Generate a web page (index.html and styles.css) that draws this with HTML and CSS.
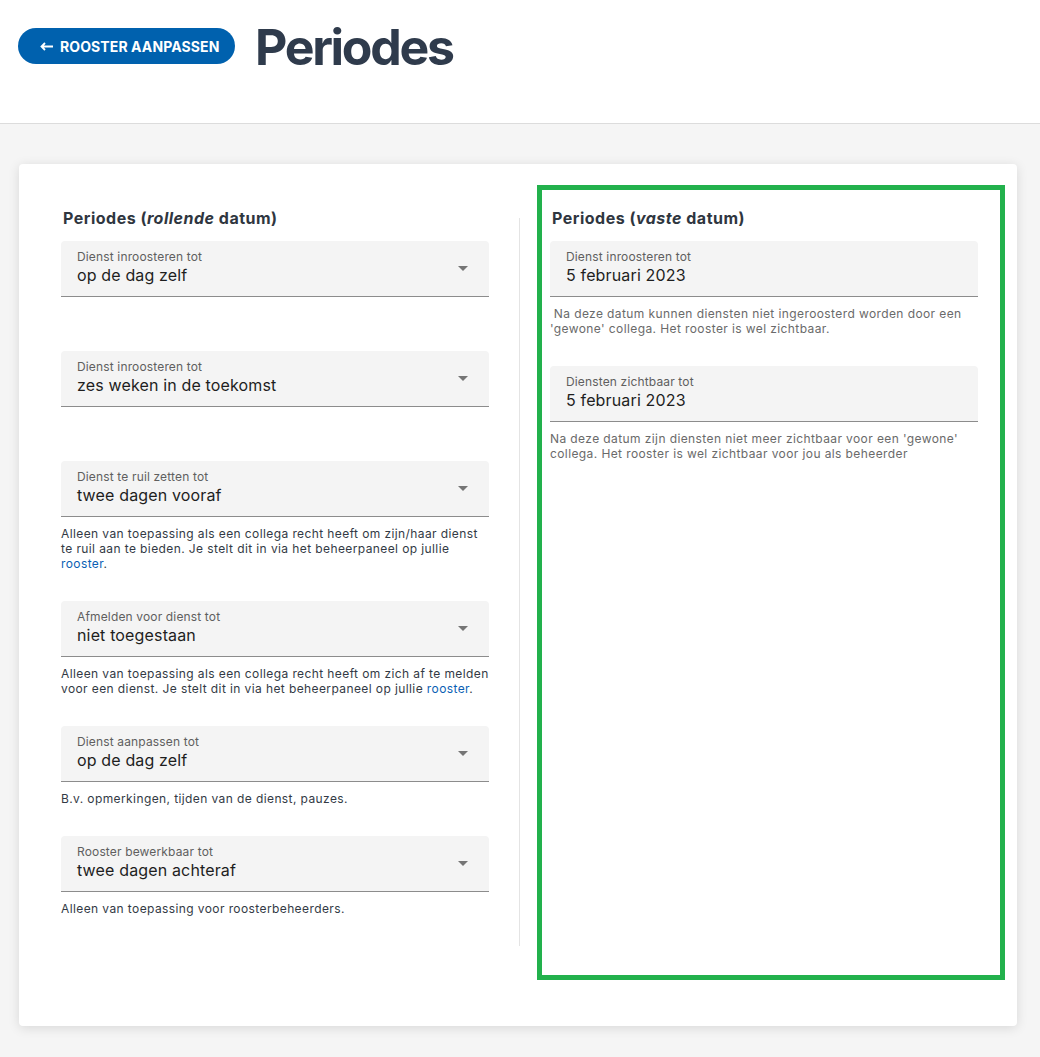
FILE: index.html
```html
<!DOCTYPE html>
<html lang="nl">
<head>
  <meta charset="UTF-8" />
  <meta name="viewport" content="width=device-width, initial-scale=1.0">
  <title>Periodes</title>
  <link rel="stylesheet" href="styles.css">
</head>
<body>

  <header class="topbar">
    <button class="back-btn">
      <svg class="arrow" width="13" height="9" viewBox="0 0 13 9"><path d="M13 4.5H2.5M5 1L1.5 4.5L5 8" fill="none" stroke="#fff" stroke-width="1.8"/></svg>
      ROOSTER AANPASSEN
    </button>
    <h1>Periodes</h1>
  </header>

  <main class="page">
    <div class="card">

      <section class="col col-rolling">
        <h3>Periodes (<em>rollende</em> datum)</h3>

        <div class="field">
          <div class="field-box">
            <label>Dienst inroosteren tot</label>
            <div class="value">op de dag zelf</div>
            <span class="caret"></span>
          </div>
          <div class="hint"></div>
        </div>

        <div class="field">
          <div class="field-box">
            <label>Dienst inroosteren tot</label>
            <div class="value">zes weken in de toekomst</div>
            <span class="caret"></span>
          </div>
          <div class="hint"></div>
        </div>

        <div class="field">
          <div class="field-box">
            <label>Dienst te ruil zetten tot</label>
            <div class="value">twee dagen vooraf</div>
            <span class="caret"></span>
          </div>
          <div class="hint">Alleen van toepassing als een collega recht heeft om zijn/haar dienst te ruil aan te bieden. Je stelt dit in via het beheerpaneel op jullie <a href="#">rooster</a>.</div>
        </div>

        <div class="field">
          <div class="field-box">
            <label>Afmelden voor dienst tot</label>
            <div class="value">niet toegestaan</div>
            <span class="caret"></span>
          </div>
          <div class="hint">Alleen van toepassing als een collega recht heeft om zich af te melden voor een dienst. Je stelt dit in via het beheerpaneel op jullie <a href="#">rooster</a>.</div>
        </div>

        <div class="field">
          <div class="field-box">
            <label>Dienst aanpassen tot</label>
            <div class="value">op de dag zelf</div>
            <span class="caret"></span>
          </div>
          <div class="hint">B.v. opmerkingen, tijden van de dienst, pauzes.</div>
        </div>

        <div class="field">
          <div class="field-box">
            <label>Rooster bewerkbaar tot</label>
            <div class="value">twee dagen achteraf</div>
            <span class="caret"></span>
          </div>
          <div class="hint">Alleen van toepassing voor roosterbeheerders.</div>
        </div>
      </section>

      <div class="divider"></div>

      <section class="col col-fixed">
        <h3>Periodes (<em>vaste</em> datum)</h3>

        <div class="field">
          <div class="field-box">
            <label>Dienst inroosteren tot</label>
            <div class="value">5 februari 2023</div>
          </div>
          <div class="hint muted">&nbsp;Na deze datum kunnen diensten niet ingeroosterd worden door een 'gewone' collega. Het rooster is wel zichtbaar.</div>
        </div>

        <div class="field">
          <div class="field-box">
            <label>Diensten zichtbaar tot</label>
            <div class="value">5 februari 2023</div>
          </div>
          <div class="hint muted">Na deze datum zijn diensten niet meer zichtbaar voor een 'gewone' collega. Het rooster is wel zichtbaar voor jou als beheerder</div>
        </div>
      </section>

    </div>
  </main>

</body>
</html>
```

FILE: styles.css
```css
body {
  margin: 0;
  background-color: #f5f5f5;
  font-family: 'Inter', 'Noto Sans', sans-serif;
  color: #222;
}

.topbar {
  background-color: #fff;
  height: 124px;
  border-bottom: 1px solid #dcdcdc;
  display: flex;
  align-items: flex-start;
  padding: 28px 0 0 18px;
  box-sizing: border-box;
}

.back-btn {
  height: 36px;
  width: 217px;
  border: none;
  border-radius: 18px;
  background-color: #0061ae;
  color: #fff;
  font-family: 'Inter', sans-serif;
  font-weight: 700;
  font-size: 14px;
  letter-spacing: 0.1px;
  cursor: pointer;
  padding: 0 0 0 22px;
  display: flex;
  align-items: center;
}

.back-btn .arrow {
  margin-right: 7px;
}

.topbar h1 {
  margin: -6px 0 0 20px;
  font-size: 50px;
  line-height: 1;
  font-weight: 700;
  letter-spacing: -2.3px;
  color: #2f3b4c;
}

.page {
  padding: 40px 23px 32px 19px;
}

.card {
  background-color: #fff;
  border-radius: 4px;
  box-shadow: 0 2px 12px rgba(0, 0, 0, 0.12);
  display: flex;
  padding: 21px 12px 46px 42px;
}

.col h3 {
  margin: 0 0 13px 2px;
  font-size: 16px;
  line-height: 20px;
  font-weight: 700;
  letter-spacing: 0.5px;
  color: #2f3640;
}

.col-rolling {
  width: 428px;
  padding: 23px 0 34px;
}

.divider {
  width: 1px;
  background-color: #e4e4e4;
  margin: 33px 17px 34px 30px;
}

.col-fixed {
  width: 428px;
  border: 5px solid #22b14c;
  padding: 18px 22px 0 8px;
}

.field-box {
  position: relative;
  height: 56px;
  background-color: #f4f4f4;
  border-radius: 4px 4px 0 0;
  border-bottom: 1px solid #8c8c8c;
  padding: 8px 16px 0;
  box-sizing: border-box;
}

.field-box label {
  display: block;
  font-size: 12px;
  line-height: 16px;
  letter-spacing: 0.15px;
  color: #5f5f5f;
}

.field-box .value {
  font-size: 16px;
  line-height: 20px;
  letter-spacing: 0.15px;
  color: #1e1e1e;
}

.caret {
  position: absolute;
  right: 21px;
  top: 25px;
  width: 0;
  height: 0;
  border-left: 5px solid transparent;
  border-right: 5px solid transparent;
  border-top: 5px solid #757575;
}

.hint {
  font-size: 12px;
  line-height: 15px;
  letter-spacing: 0.4px;
  color: #333a45;
  padding-top: 9px;
  min-height: 15px;
  margin-bottom: 30px;
}

.hint a {
  color: #0a5fb4;
  text-decoration: none;
}

.hint.muted {
  color: #6a6a6a;
}
```
